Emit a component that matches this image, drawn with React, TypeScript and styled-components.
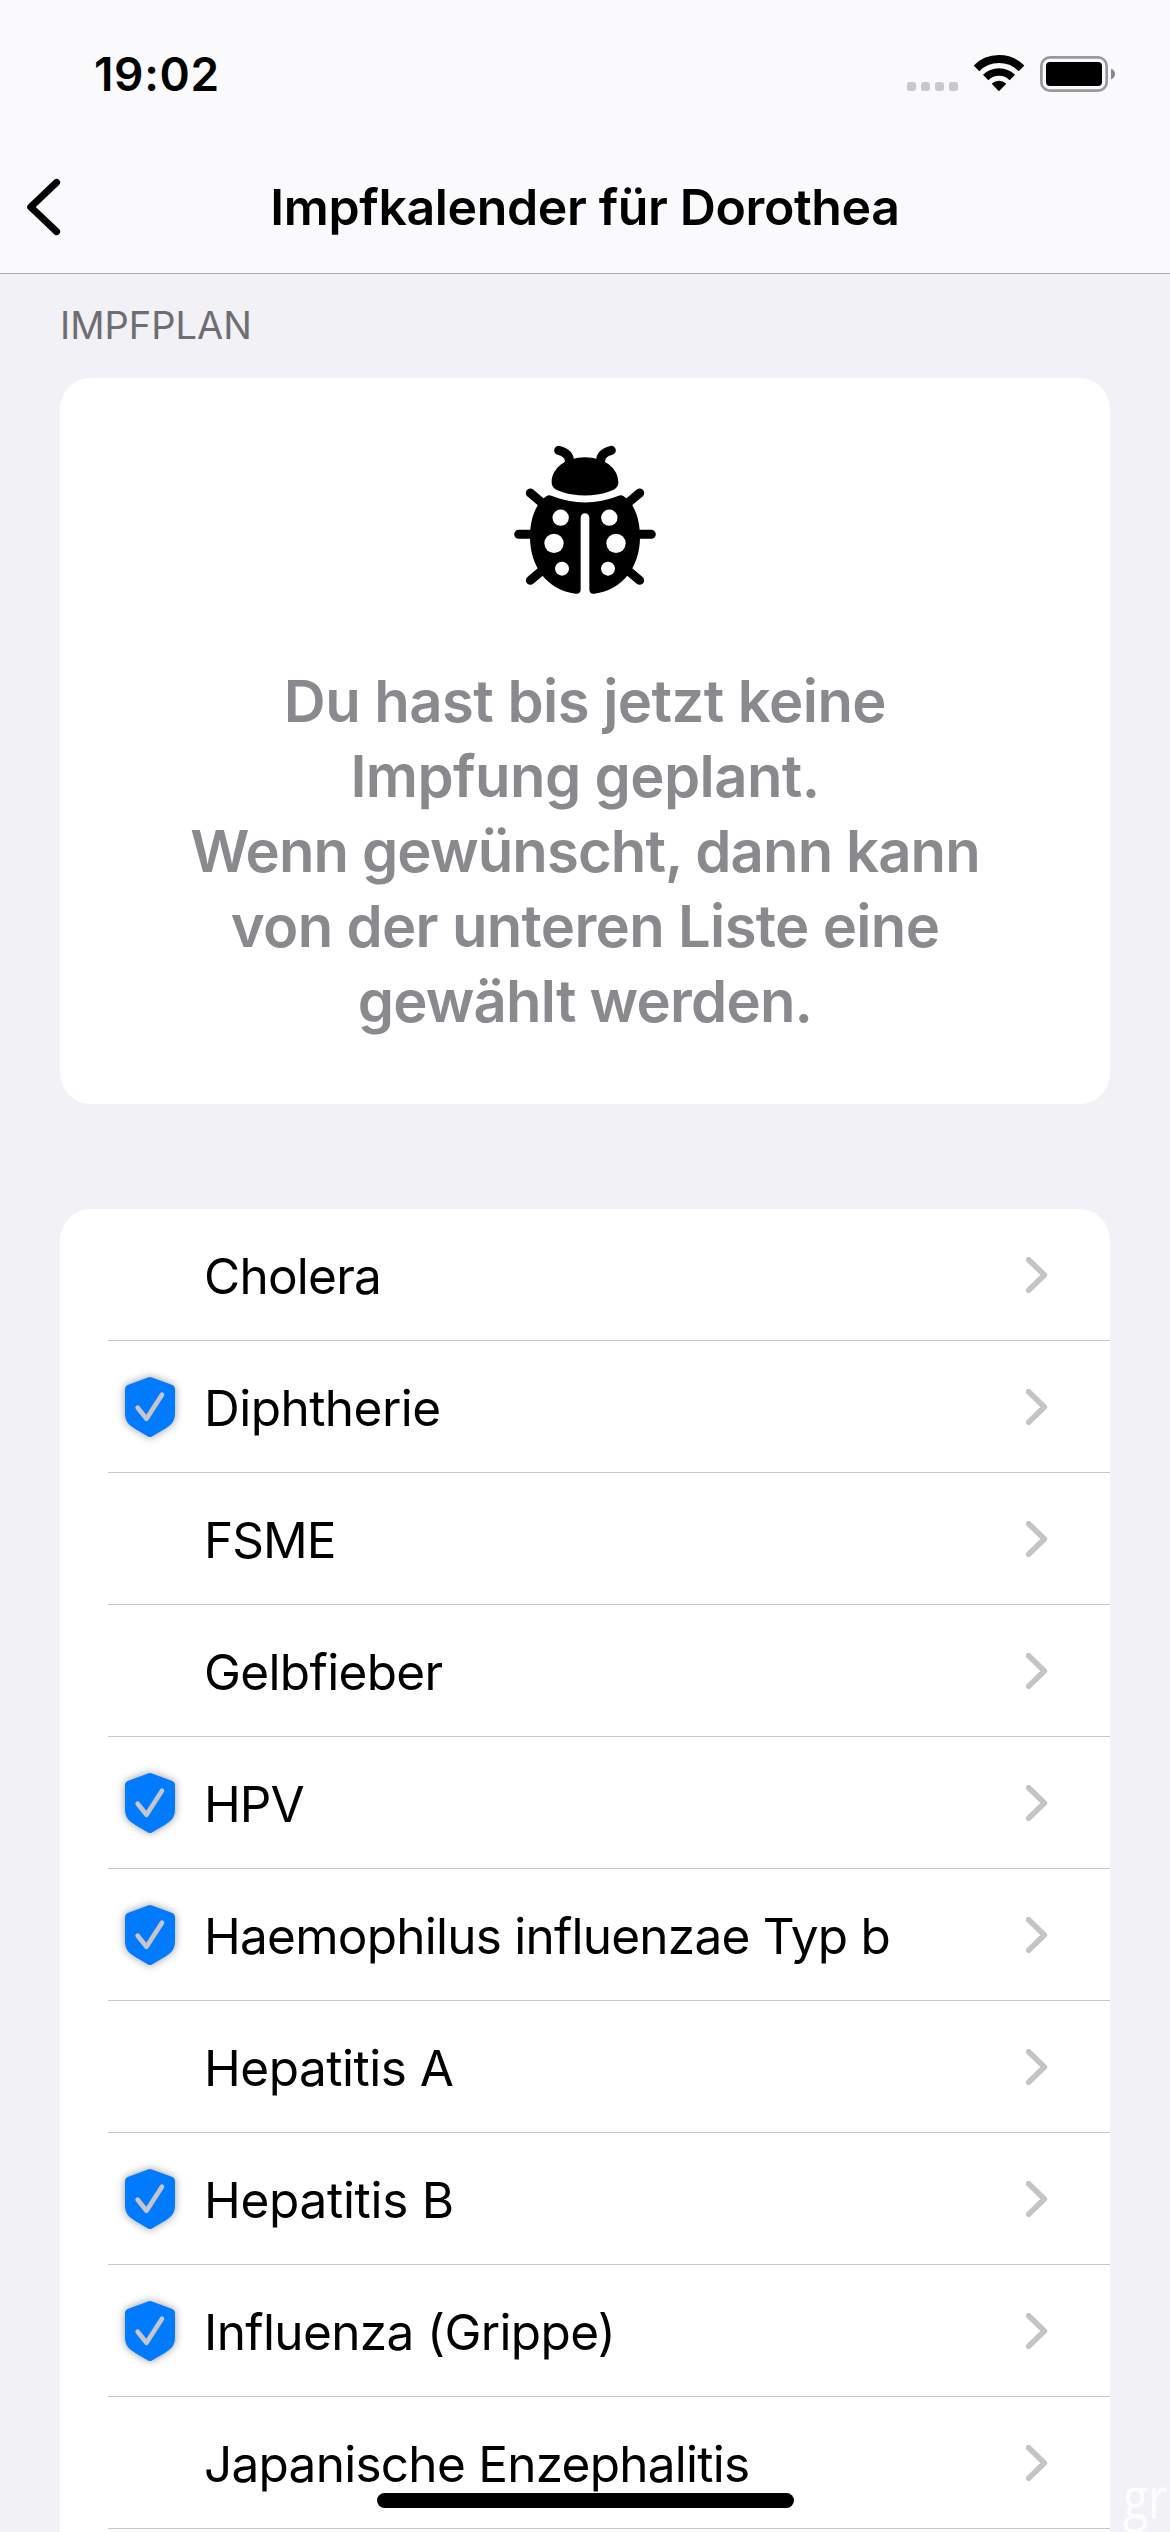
import React from "react";
import styled, { createGlobalStyle } from "styled-components";

const GlobalStyle = createGlobalStyle`
  *, *::before, *::after { box-sizing: border-box; }
  html, body { margin: 0; padding: 0; background: #f2f1f6; }
  body { font-family: Inter, Roboto, "Liberation Sans", sans-serif; }
`;

const Screen = styled.div`
  position: relative;
  display: flex;
  flex-direction: column;
  width: 1170px;
  height: 2532px;
  overflow: hidden;
  background: #f2f1f6;
  color: #000;
`;

const TopArea = styled.header`
  flex: none;
  height: 274px;
  border-bottom: 1px solid #a8a8ad;
  background: linear-gradient(
    90deg,
    #fbfbfd 0,
    #fbfbfd 30px,
    #faf9fd 66px,
    #fafafc 110px,
    #fafafc 1080px,
    #faf9fd 1110px,
    #fbfbfd 1150px
  );
`;

const StatusBar = styled.div`
  display: flex;
  align-items: center;
  justify-content: space-between;
  height: 148px;
  padding: 0 40px 0 94px;
`;

const Time = styled.time`
  font-size: 46px;
  font-weight: 600;
  line-height: 56px;
  letter-spacing: 0.65px;
`;

const StatusGlyphs = styled.svg`
  display: block;
  width: 230px;
  height: 70px;
  margin-top: 2px;
`;

const NavBar = styled.nav`
  display: grid;
  grid-template-columns: 120px 1fr 120px;
  align-items: center;
  height: 118px;
`;

const BackButton = styled.button`
  display: flex;
  align-items: center;
  height: 88px;
  padding: 0 0 0 24px;
  border: 0;
  background: none;
`;

const Title = styled.h1`
  margin: 0;
  font-size: 50px;
  font-weight: 600;
  line-height: 60px;
  letter-spacing: -0.37px;
  text-align: center;
  white-space: nowrap;
`;

const Content = styled.main`
  display: flex;
  flex-direction: column;
  padding: 0 60px;
`;

const SectionLabel = styled.h2`
  display: flex;
  align-items: center;
  height: 104px;
  margin: 0;
  padding-bottom: 2px;
  color: #6d6d72;
  font-size: 38px;
  font-weight: 400;
  line-height: 46px;
`;

const Card = styled.section`
  border-radius: 31px;
  background: #fff;
`;

const EmptyCard = styled(Card)`
  display: flex;
  flex-direction: column;
  align-items: center;
  gap: 44px;
  height: 726px;
  padding-top: 42px;
`;

const Message = styled.p`
  display: flex;
  flex-direction: column;
  align-items: center;
  margin: 0;
  color: #8a8a8e;
  font-size: 58px;
  font-weight: 600;
  line-height: 75px;
`;

const MessageLine = styled.span<{ $tracking: number }>`
  white-space: nowrap;
  letter-spacing: ${(p) => p.$tracking}px;
`;

const ListCard = styled(Card)`
  height: 1500px;
  margin-top: 105px;
`;

const Row = styled.div`
  display: flex;
  align-items: center;
  height: 132px;
  margin-left: 48px;
  padding: 1px 62px 0 17px;
  border-bottom: 1px solid #c6c6c8;
`;

const IconSlot = styled.span`
  display: flex;
  flex: none;
  width: 50px;
  height: 60px;
  margin-right: 29px;
`;

const RowLabel = styled.span<{ $tracking: number }>`
  flex: 1;
  padding-top: 2px;
  font-size: 49.5px;
  line-height: 60px;
  white-space: nowrap;
  letter-spacing: ${(p) => p.$tracking}px;
`;

const ShieldSvg = styled.svg`
  display: block;
  overflow: visible;
  filter: drop-shadow(0 0 4.5px rgba(0, 0, 0, 0.4));
`;

const HomeIndicator = styled.div`
  position: absolute;
  left: 377px;
  top: 2493px;
  width: 417px;
  height: 15px;
  border-radius: 8px;
  background: #000;
`;

const CornerText = styled.span`
  position: absolute;
  left: 1123px;
  bottom: 0;
  color: #fdfdfe;
  font-family: "Open Sans", "Noto Sans", sans-serif;
  font-size: 59px;
  line-height: 72px;
  transform: scaleX(0.79);
  transform-origin: 0 50%;
`;

function StatusIcons() {
  return (
    <StatusGlyphs viewBox="0 0 690 210">
      {[21, 63, 105, 147].map((x) => (
        <rect key={x} x={x} y="126" width="27" height="27" rx="8" fill="#c9c9cb" />
      ))}
      <g fill="none" stroke="#000">
        <path d="M229.5 85A96 96 0 0 1 364.500 85" strokeWidth="24" />
        <path d="M257 112.500A57 57 0 0 1 337 112.500" strokeWidth="23" />
      </g>
      <path
        d="M297 151L278 131.500A29 29 0 0 1 316 131.500Z"
        stroke="#000"
        strokeWidth="4"
        strokeLinejoin="round"
      />
      <rect x="424" y="52" width="196" height="100" rx="26" fill="none" stroke="#99999b" strokeWidth="8" />
      <rect x="438" y="66" width="168" height="72" rx="12" />
      <path d="M633 86Q645 90 645 102Q645 114 633 118Z" fill="#88888a" />
    </StatusGlyphs>
  );
}

function BackIcon() {
  return (
    <svg width="40" height="60" viewBox="0 0 40 60">
      <path
        d="M32.600 5.400L6.700 30L32.600 54.600"
        fill="none"
        stroke="#000"
        strokeWidth="7"
        strokeLinecap="round"
        strokeLinejoin="round"
      />
    </svg>
  );
}

function Ladybug() {
  return (
    <svg width="210" height="200" viewBox="0 0 630 600">
      <g fill="none" stroke="#000" strokeWidth="27" strokeLinecap="round" strokeLinejoin="round">
        <path d="M236 91Q268 99 268 122V140" />
        <path d="M394 91Q362 99 362 122V140" />
        <path d="M151 219L195 256M479 219L435 256" />
        <path d="M116 343H170M514 343H460" />
        <path d="M151 481L195 444M479 481L435 444" />
      </g>
      <path d="M215 187C215 146 256 112 315 112S415 146 415 187C415 204 402 211 386 215C342 230 288 230 244 215C228 211 215 204 215 187Z" />
      <path
        fillRule="evenodd"
        d="M200 228Q207 224 216 228C280 254 350 254 414 228Q423 224 430 228C461 247 480 294 480 351C480 440 428 511 343 521Q328 523 328 508V293A13 13 0 0 0 302 293V508Q302 523 287 521C202 511 150 440 150 351C150 294 169 247 200 228Z"
      />
      <g fill="#fff">
        <circle cx="242" cy="293" r="24.500" />
        <circle cx="388" cy="293" r="24.500" />
        <circle cx="222" cy="370" r="29" />
        <circle cx="408" cy="370" r="29" />
        <circle cx="246" cy="446" r="21" />
        <circle cx="384" cy="446" r="21" />
      </g>
    </svg>
  );
}

function Shield() {
  return (
    <ShieldSvg width="50" height="60" viewBox="75 81 150 180">
      <path
        fill="#007aff"
        d="M144 82.500Q150 80 156 82.500L215 104Q225 108 225 117V190C225 208 219 219 206 229C191 241 172 249 156 259.500Q150 263 144 259.500C128 249 109 241 94 229C81 219 75 208 75 190V117Q75 108 85 104Z"
      />
      <path
        d="M113 173L139.500 206L186 134"
        fill="none"
        stroke="#c6c6c8"
        strokeWidth="14"
        strokeLinecap="round"
        strokeLinejoin="round"
      />
    </ShieldSvg>
  );
}

function Chevron() {
  return (
    <svg width="22" height="36" viewBox="198 171 66 108">
      <path
        d="M206 179L253 225L206 271"
        fill="none"
        stroke="#c4c4c6"
        strokeWidth="17"
        strokeLinecap="round"
        strokeLinejoin="round"
      />
    </svg>
  );
}

const messageLines = [
  { text: "Du hast bis jetzt keine", tracking: -0.53 },
  { text: "Impfung geplant.", tracking: -0.59 },
  { text: "Wenn gewünscht, dann kann", tracking: -0.87 },
  { text: "von der unteren Liste eine", tracking: -0.66 },
  { text: "gewählt werden.", tracking: -0.79 },
];

const vaccines = [
  { name: "Cholera", recommended: false, tracking: -0.75 },
  { name: "Diphtherie", recommended: true, tracking: -0.53 },
  { name: "FSME", recommended: false, tracking: -1 },
  { name: "Gelbfieber", recommended: false, tracking: -0.65 },
  { name: "HPV", recommended: true, tracking: -1 },
  { name: "Haemophilus influenzae Typ b", recommended: true, tracking: -0.76 },
  { name: "Hepatitis A", recommended: false, tracking: -0.49 },
  { name: "Hepatitis B", recommended: true, tracking: -0.3 },
  { name: "Influenza (Grippe)", recommended: true, tracking: -0.63 },
  { name: "Japanische Enzephalitis", recommended: false, tracking: -0.74 },
];

export default function App() {
  return (
    <Screen>
      <GlobalStyle />
      <TopArea>
        <StatusBar>
          <Time>19:02</Time>
          <StatusIcons />
        </StatusBar>
        <NavBar>
          <BackButton aria-label="Zurück">
            <BackIcon />
          </BackButton>
          <Title>Impfkalender für Dorothea</Title>
        </NavBar>
      </TopArea>
      <Content>
        <SectionLabel>IMPFPLAN</SectionLabel>
        <EmptyCard>
          <Ladybug />
          <Message>
            {messageLines.map((line) => (
              <MessageLine key={line.text} $tracking={line.tracking}>
                {line.text}
              </MessageLine>
            ))}
          </Message>
        </EmptyCard>
        <ListCard>
          {vaccines.map((v) => (
            <Row key={v.name}>
              <IconSlot>{v.recommended && <Shield />}</IconSlot>
              <RowLabel $tracking={v.tracking}>{v.name}</RowLabel>
              <Chevron />
            </Row>
          ))}
        </ListCard>
      </Content>
      <HomeIndicator />
      <CornerText>gr</CornerText>
    </Screen>
  );
}
